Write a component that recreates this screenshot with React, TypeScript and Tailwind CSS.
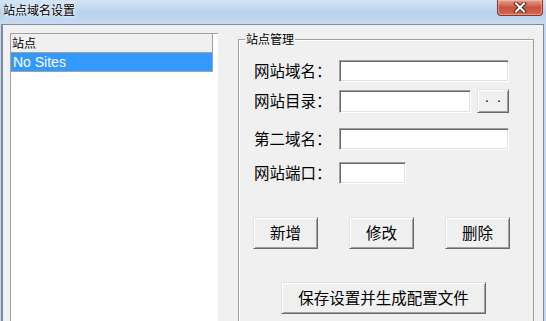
import React from "react";

const cjk = { fontFamily: '"Noto Sans CJK SC", "Noto Sans", sans-serif' };

function Sunken({ w }: { w: string }) {
  return (
    <div
      className={`${w} h-[22px] bg-white border border-t-[#a0a0a0] border-l-[#a0a0a0] border-b-white border-r-white shadow-[inset_1px_1px_0_#696969,inset_-1px_-1px_0_#e3e3e3]`}
    />
  );
}

function Btn({ children, w, h }: { children: React.ReactNode; w: string; h: string }) {
  return (
    <div
      className={`${w} ${h} flex items-center justify-center bg-[#f0f0f0] border border-t-[#e3e3e3] border-l-[#e3e3e3] border-b-[#696969] border-r-[#696969] shadow-[inset_1px_1px_0_#ffffff,inset_-1px_-1px_0_#a0a0a0] text-black`}
      style={cjk}
    >
      {children}
    </div>
  );
}

export default function App() {
  return (
    <div className="w-[546px] h-[321px] overflow-hidden flex flex-col bg-[#c3d8f0] relative" style={cjk}>
      {/* title bar */}
      <div className="h-[24px] shrink-0 flex items-start bg-gradient-to-b from-[#d3e4f7] via-[#b9d1ec] to-[#c6dbf2]">
        <div className="pl-[3px] pt-[2px] text-[12px] leading-[16px] text-black [text-shadow:0_0_6px_#ffffff,0_0_3px_#ffffff]">
          站点域名设置
        </div>
      </div>
      {/* close button */}
      <div className="absolute left-[497px] top-0 w-[46px] h-[16px] rounded-b-[4px] border border-t-0 border-[#8a3426] bg-gradient-to-b from-[#e3a192] via-[#c9533f] to-[#cf6a52] flex items-center justify-center shadow-[inset_0_0_0_1px_rgba(255,200,190,0.5)]">
        <svg width="14" height="11" viewBox="0 0 14 11">
          <path d="M3 1.5 L11 9.5 M11 1.5 L3 9.5" stroke="#4a2a25" strokeWidth="4" strokeLinecap="square" />
          <path d="M3 1.5 L11 9.5 M11 1.5 L3 9.5" stroke="#ffffff" strokeWidth="2" strokeLinecap="square" />
        </svg>
      </div>
      {/* client */}
      <div className="flex-1 flex ml-[1px] mr-[2px]">
        <div className="flex-1 flex bg-[#f0f0f0] border-l-2 border-t border-r border-[#7d8a9a] pl-[7px] pt-[8px]">
          {/* list */}
          <div className="w-[208px] h-[320px] bg-white border-l border-t border-[#a0a0a0] shrink-0">
            <div className="w-[202px]">
              <div className="h-[19px] bg-[#f0f0f0] border-r border-b border-[#a0a0a0] pl-[1px] text-[12px] leading-[18px] text-black">
                站点
              </div>
              <div
                className="h-[19px] bg-[#3399ff] border-r border-b border-[#a0a0a0] pl-[2px] text-[14px] leading-[18px] text-white"
                style={{ fontFamily: '"Liberation Sans", Arial, sans-serif' }}
              >
                No Sites
              </div>
            </div>
          </div>
          {/* group box */}
          <div className="ml-[20px] mt-[6px] w-[296px] h-[320px] shrink-0 relative border border-[#a0a0a0] shadow-[inset_1px_1px_0_#ffffff] pl-[15px]">
            <div className="absolute left-[6px] top-[-8px] px-[1px] bg-[#f0f0f0] text-[12px] leading-[14px] text-black">
              站点管理
            </div>
            <div className="flex flex-col text-[15.5px] text-black">
              <div className="flex items-center h-[22px] mt-[20px]">
                <div className="w-[85px]">网站域名：</div>
                <Sunken w="w-[170px]" />
              </div>
              <div className="flex items-center h-[24px] mt-[7px]">
                <div className="w-[85px]">网站目录：</div>
                <div className="w-[132px] flex">
                  <div className="w-[132px] h-[23px] bg-white border border-t-[#a0a0a0] border-l-[#a0a0a0] border-b-white border-r-white shadow-[inset_1px_1px_0_#696969,inset_-1px_-1px_0_#e3e3e3]" />
                </div>
                <div className="ml-[6px]">
                  <Btn w="w-[32px]" h="h-[24px]">
                    <span
                      className="relative -top-[4px] text-[14px] leading-none tracking-[8px] pl-[8px]"
                      style={{ fontFamily: '"Liberation Sans", Arial, sans-serif' }}
                    >
                      ..
                    </span>
                  </Btn>
                </div>
              </div>
              <div className="flex items-center h-[22px] mt-[15px]">
                <div className="w-[85px]">第二域名：</div>
                <Sunken w="w-[170px]" />
              </div>
              <div className="flex items-center h-[22px] mt-[12px]">
                <div className="w-[85px]">网站端口：</div>
                <Sunken w="w-[67px]" />
              </div>
              <div className="flex gap-[31px] mt-[33px] -ml-[1px] text-[15.5px]">
                <Btn w="w-[65px]" h="h-[32px]">新增</Btn>
                <Btn w="w-[65px]" h="h-[32px]">修改</Btn>
                <Btn w="w-[65px]" h="h-[32px]">删除</Btn>
              </div>
              <div className="mt-[33px] ml-[27px] text-[15.5px]">
                <Btn w="w-[205px]" h="h-[32px]">保存设置并生成配置文件</Btn>
              </div>
            </div>
          </div>
        </div>
      </div>
    </div>
  );
}
